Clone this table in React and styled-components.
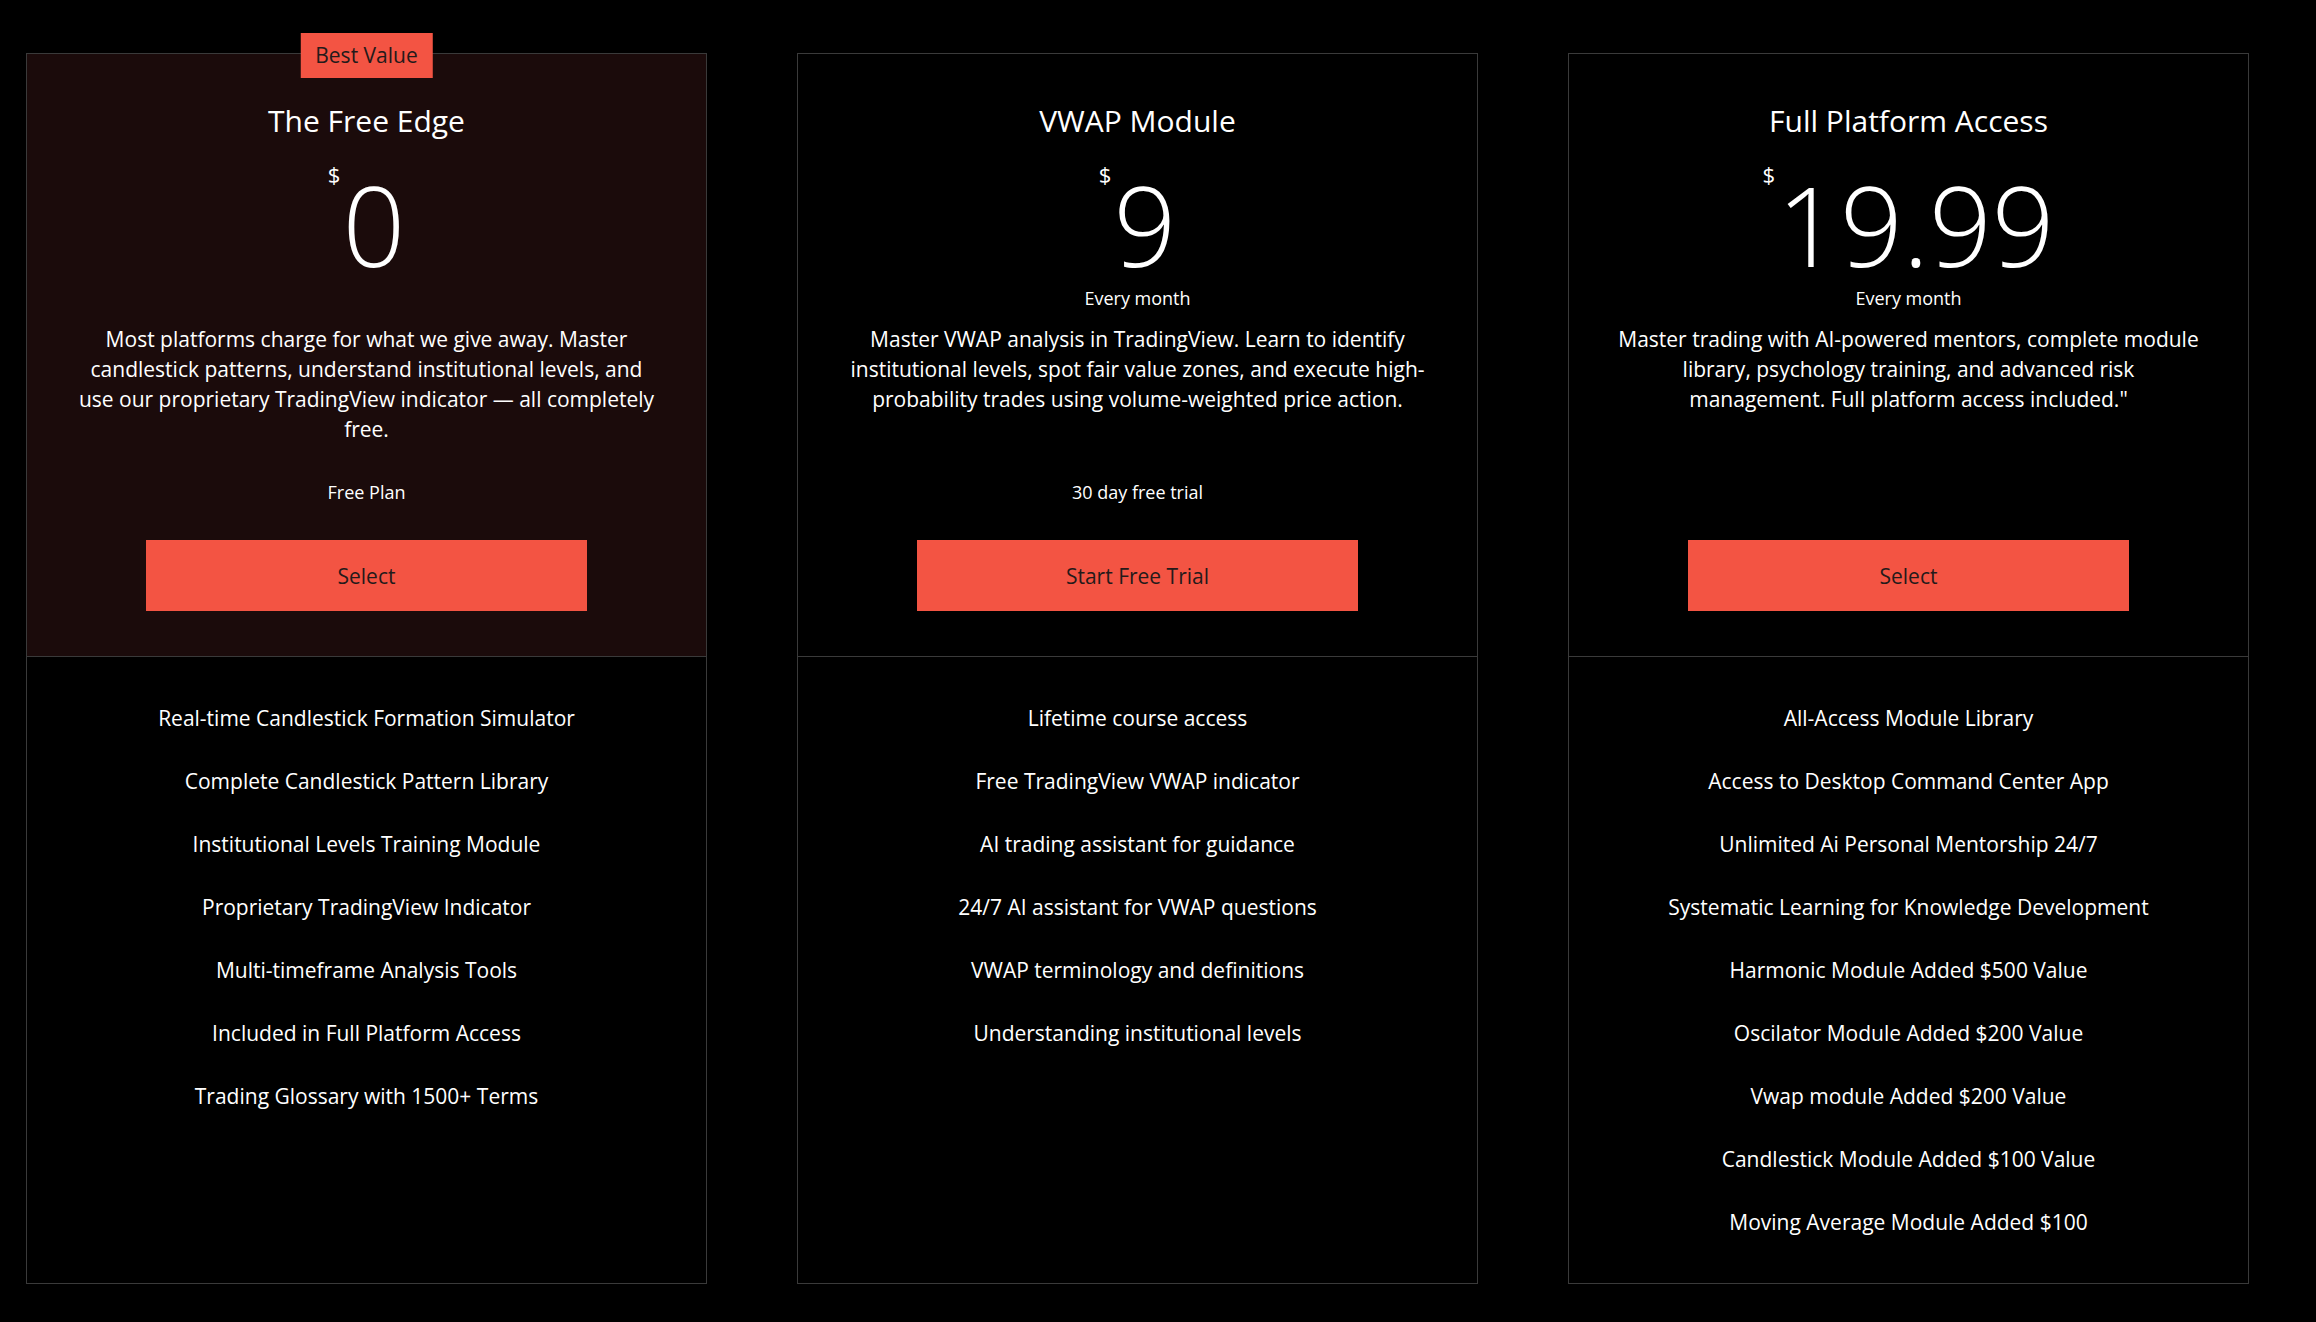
import React from "react";
import styled, { createGlobalStyle } from "styled-components";

const plans = [
  {
    title: "The Free Edge",
    price: "0",
    period: "",
    badge: "Best Value",
    highlight: true,
    description:
      "Most platforms charge for what we give away. Master candlestick patterns, understand institutional levels, and use our proprietary TradingView indicator — all completely free.",
    note: "Free Plan",
    cta: "Select",
    features: [
      "Real-time Candlestick Formation Simulator",
      "Complete Candlestick Pattern Library",
      "Institutional Levels Training Module",
      "Proprietary TradingView Indicator",
      "Multi-timeframe Analysis Tools",
      "Included in Full Platform Access",
      "Trading Glossary with 1500+ Terms",
    ],
  },
  {
    title: "VWAP Module",
    price: "9",
    period: "Every month",
    description:
      "Master VWAP analysis in TradingView. Learn to identify institutional levels, spot fair value zones, and execute high-probability trades using volume-weighted price action.",
    note: "30 day free trial",
    cta: "Start Free Trial",
    features: [
      "Lifetime course access",
      "Free TradingView VWAP indicator",
      "AI trading assistant for guidance",
      "24/7 AI assistant for VWAP questions",
      "VWAP terminology and definitions",
      "Understanding institutional levels",
    ],
  },
  {
    title: "Full Platform Access",
    price: "19.99",
    period: "Every month",
    description:
      "Master trading with AI-powered mentors, complete module library, psychology training, and advanced risk management. Full platform access included.\"",
    note: "",
    cta: "Select",
    features: [
      "All-Access Module Library",
      "Access to Desktop Command Center App",
      "Unlimited Ai Personal Mentorship 24/7",
      "Systematic Learning for Knowledge Development",
      "Harmonic Module Added $500 Value",
      "Oscilator Module Added $200 Value",
      "Vwap module Added $200 Value",
      "Candlestick Module Added $100 Value",
      "Moving Average Module Added $100",
    ],
  },
];

export default function App() {
  return (
    <>
      <GlobalStyle />
      <PlansGrid>
        {plans.map((plan) => (
          <PlanCard key={plan.title}>
            {plan.badge && <Badge>{plan.badge}</Badge>}
            <CardHeader $highlight={plan.highlight}>
              <PlanTitle>{plan.title}</PlanTitle>
              <PriceRow>
                <Currency>$</Currency>
                <Amount>{plan.price}</Amount>
              </PriceRow>
              <Period>{plan.period}</Period>
              <Description>{plan.description}</Description>
              <Note>{plan.note}</Note>
              <SelectButton>{plan.cta}</SelectButton>
            </CardHeader>
            <FeatureList>
              {plan.features.map((f) => (
                <FeatureItem key={f}>{f}</FeatureItem>
              ))}
            </FeatureList>
          </PlanCard>
        ))}
      </PlansGrid>
    </>
  );
}

const GlobalStyle = createGlobalStyle`
  body {
    margin: 0;
    background: #000;
    font-family: "Open Sans", "Liberation Sans", sans-serif;
    color: #fff;
  }
`;

const PlansGrid = styled.div`
  display: grid;
  grid-template-columns: repeat(3, 681px);
  column-gap: 90px;
  padding: 53px 0 40px 26px;
  align-items: stretch;
`;

const PlanCard = styled.div`
  position: relative;
  display: flex;
  flex-direction: column;
  border: 1px solid #3a3a3a;
  background: #000;
`;

const Badge = styled.div`
  position: absolute;
  top: -21px;
  left: 50%;
  transform: translateX(-50%);
  height: 45px;
  line-height: 45px;
  padding: 0 15px;
  background: #f35443;
  color: #241a1a;
  font-size: 21px;
  white-space: nowrap;
`;

const CardHeader = styled.div`
  display: flex;
  flex-direction: column;
  align-items: center;
  text-align: center;
  padding: 46px 48px 45px;
  background: ${(p) => (p.$highlight ? "#1b0b0b" : "transparent")};
  border-bottom: 1px solid #3a3a3a;
`;

const PlanTitle = styled.h2`
  margin: 0;
  font-size: 30px;
  font-weight: 400;
  line-height: 42px;
`;

const PriceRow = styled.div`
  display: flex;
  align-items: flex-start;
  height: 110px;
  margin-top: 27px;
`;

const Currency = styled.span`
  font-size: 22px;
  line-height: 22px;
  margin-top: -6px;
  margin-right: 2px;
`;

const Amount = styled.div`
  font-size: 110px;
  font-weight: 300;
  line-height: 110px;
  height: 110px;
`;

const Period = styled.div`
  margin-top: 7px;
  min-height: 24px;
  font-size: 18px;
  line-height: 24px;
`;

const Description = styled.p`
  margin: 14px 0 0;
  min-height: 120px;
  font-size: 21px;
  line-height: 30px;
`;

const Note = styled.div`
  margin-top: 36px;
  min-height: 24px;
  font-size: 18px;
  line-height: 24px;
`;

const SelectButton = styled.button`
  margin-top: 36px;
  width: 441px;
  height: 71px;
  border: none;
  background: #f35443;
  color: #241a1a;
  font-family: inherit;
  font-size: 21px;
  cursor: pointer;
`;

const FeatureList = styled.ul`
  list-style: none;
  margin: 0;
  padding: 46px 20px;
  display: flex;
  flex-direction: column;
  gap: 33px;
  text-align: center;
`;

const FeatureItem = styled.li`
  font-size: 21px;
  line-height: 30px;
`;
